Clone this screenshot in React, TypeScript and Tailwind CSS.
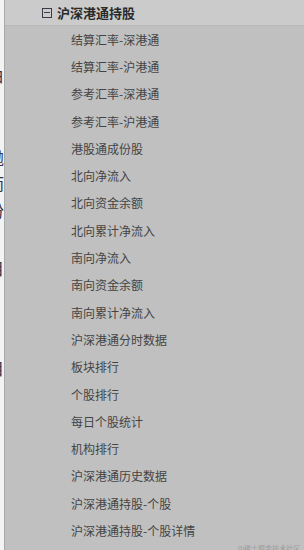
const items = [
  "结算汇率-深港通",
  "结算汇率-沪港通",
  "参考汇率-深港通",
  "参考汇率-沪港通",
  "港股通成份股",
  "北向净流入",
  "北向资金余额",
  "北向累计净流入",
  "南向净流入",
  "南向资金余额",
  "南向累计净流入",
  "沪深港通分时数据",
  "板块排行",
  "个股排行",
  "每日个股统计",
  "机构排行",
  "沪深港通历史数据",
  "沪深港通持股-个股",
  "沪深港通持股-个股详情",
];

// characters of the page behind, cut off at the left edge
const behind: [number, string][] = [
  [67, "白"],
  [149, "抛"],
  [175, "而"],
  [202, "汾"],
  [234, "、"],
  [260, "目"],
  [360, "目"],
];

export default function App() {
  const font = { fontFamily: '"Microsoft YaHei", "Noto Sans CJK SC", sans-serif' };
  return (
    <div className="flex h-[550px] w-[304px] overflow-hidden bg-[#c0c0c0]" style={font}>
      {/* page behind the menu */}
      <div className="relative h-full w-[4px] shrink-0 overflow-hidden bg-[#f3f3f3]">
        {behind.map(([top, ch]) => (
          <span
            key={top}
            className="absolute right-0 text-[16px] leading-[16px] text-[#2a2f4a]"
            style={{ top }}
          >
            {ch}
          </span>
        ))}
      </div>
      <div className="w-px shrink-0 bg-[#a9a9a9]" />

      <div className="flex min-w-0 flex-1 flex-col">
        <div className="flex h-[25px] shrink-0 items-center bg-[#cbcbcb] pl-[37px]">
          <span className="mr-[5px] flex h-[10px] w-[10px] items-center justify-center border border-[#3a3a48]">
            <span className="h-px w-[6px] bg-[#3a3a48]" />
          </span>
          <span className="text-[13px] font-bold leading-none text-[#2a2a2a]">沪深港通持股</span>
        </div>
        <div className="h-px shrink-0 bg-[#b8b8b8]" />

        <div className="flex flex-1 flex-col">
          {items.map((t) => (
            <div key={t} className="flex h-[27.3px] shrink-0 items-center pl-[66px] text-[12px] text-[#444]">
              {t}
            </div>
          ))}
        </div>

        <div className="flex h-[8px] shrink-0 items-start justify-end pr-[4px]">
          <span className="text-[7px] leading-none text-[#9c9c9c]">@稀土掘金技术社区</span>
        </div>
        <div className="h-[3px] shrink-0 bg-[#cfcfcf]" />
      </div>
    </div>
  );
}
